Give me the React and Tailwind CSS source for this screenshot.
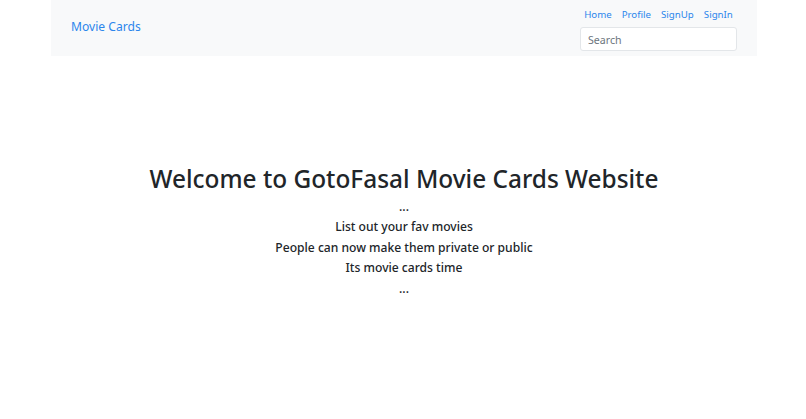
const links = ['Home', 'Profile', 'SignUp', 'SignIn'];
const lines = ['List out your fav movies', 'People can now make them private or public', 'Its movie cards time'];

export default function App() {
  return (
    <div className="font-['Noto_Sans',sans-serif] min-h-[419px] bg-white text-[#212529]">
      <nav className="ml-[51px] w-[706px] h-[56px] bg-[#f8f9fa] flex justify-between pl-[20px] pr-[20px]">
        <a href="#" className="mt-[17px] text-[12.1px] leading-[20px] text-[#2b86ec]">Movie Cards</a>
        <div className="w-[157px] flex flex-col items-center">
          <div className="flex gap-[10px] mt-[5px] h-[20px] items-center text-[9.7px] text-[#2b86ec]">
            {links.map((l) => <a key={l} href="#">{l}</a>)}
          </div>
          <input
            placeholder="Search"
            className="mt-[2px] w-full h-[24px] border border-[#e3e6e9] rounded-[3px] bg-white px-[7px] pt-[1px] text-[10.6px] placeholder:text-[#6c757d]"
          />
        </div>
      </nav>
      <main className="flex flex-col items-center pl-[2px] pt-[106px]">
        <h1 className="text-[24.4px] leading-[34px] font-medium">Welcome to GotoFasal Movie Cards Website</h1>
        <p className="text-[12.1px] font-medium leading-[20px] mt-[1px]">...</p>
        {lines.map((l) => <p key={l} className="text-[12.1px] font-medium leading-[20.5px]">{l}</p>)}
        <p className="text-[12.1px] font-medium leading-[20px]">...</p>
      </main>
    </div>
  );
}
